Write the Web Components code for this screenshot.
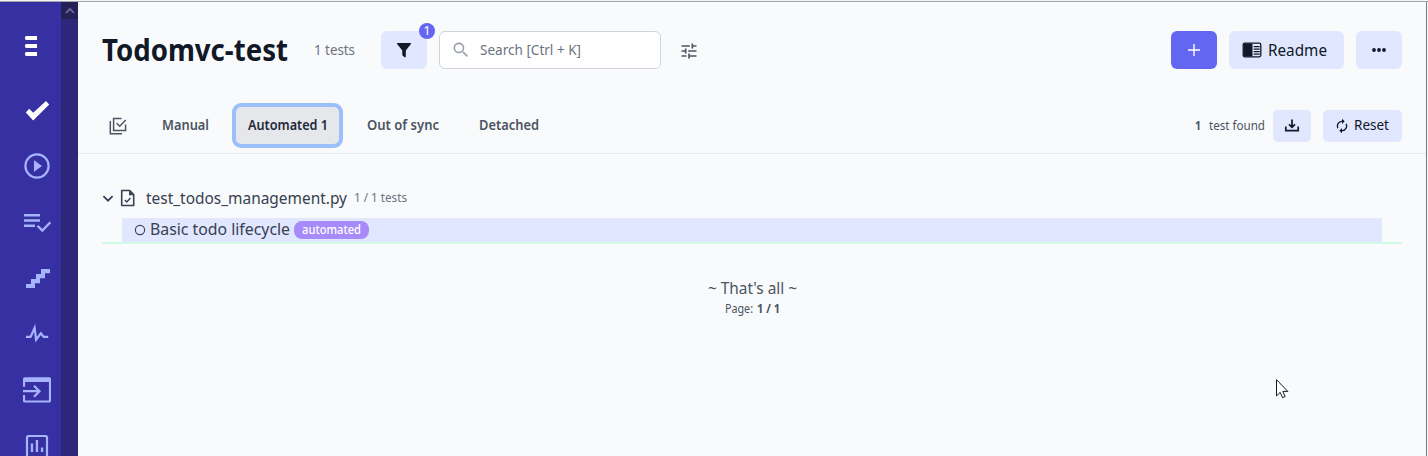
<!DOCTYPE html>
<html lang="en">
<head>
<meta charset="utf-8">
<title>Todomvc-test</title>
<style>
html,body{margin:0;height:100%;overflow:hidden;background:#f9fafb;font-family:"Noto Sans","Open Sans",sans-serif}
</style>
</head>
<body>
<tests-app></tests-app>
<script>
const define = (name, html, ready) => customElements.define(name, class extends HTMLElement {
  connectedCallback() {
    if (this.shadowRoot) return;
    const t = document.createElement('template');
    t.innerHTML = html;
    this.attachShadow({mode: 'open'}).append(t.content.cloneNode(true));
    if (ready) ready(this, this.shadowRoot);
  }
});

// Text run with a size, weight, and a condensed width.
define('fit-text', `<style>
:host{display:block;flex:none;white-space:nowrap}
span{display:inline-block;transform-origin:0 50%;vertical-align:top}
</style><span><slot></slot></span>`, (el, root) => {
  const g = n => el.getAttribute(n);
  const w = +g('w'), size = +g('size'), span = root.querySelector('span');
  el.style.cssText += `;width:${w}px;font-size:${size}px;font-weight:${g('weight') || 400};color:${g('color') || 'inherit'};height:${Math.round(size * 1.4)}px;line-height:${Math.round(size * 1.4)}px`;
  span.style.transform = `translateY(${g('dy') || 0}px) scaleX(${w / span.offsetWidth})`;
  const exact = span.getBoundingClientRect().width;
  if (exact) span.style.transform = `translateY(${g('dy') || 0}px) scaleX(${(w / span.offsetWidth) * (w / exact)})`;
});

const icons = {
  menu: [28, '<path fill="#fff" d="M3 4h11v4H3l-1-1V5zM3 12h11v4H3l-1-1v-2zM3 20h11v4H3l-1-1v-2z"/>'],
  check: [28, '<path fill="#fff" d="M6.2 12.8l4 4L23 5l3.2 3.5L10.2 24.6 2.8 16.4z"/>'],
  play: [28, '<circle cx="14" cy="14" r="11.6" fill="none" stroke="currentColor" stroke-width="2.2"/><path fill="currentColor" d="M11 8.3v11.4l8-5.7z"/>'],
  list: [28, '<path fill="currentColor" d="M1 6h16v2.5H1zM1 11.2h16v2.5H1zM1 16.4h11v2.5H1z"/><path fill="none" stroke="currentColor" stroke-width="2.3" d="M14.5 17.7l4.8 4.8 8-8.2"/>'],
  stairs: [28, '<path fill="currentColor" d="M3 20h5v-5h5v-5h5V5h9v4.2h-5v5h-5v5h-5V24H3z"/>'],
  pulse: [28, '<path fill="none" stroke="currentColor" stroke-width="2.2" d="M3 16.9h4.6l4-9 1.5 11.8 4.8-6.4 2.9 3.6h4.4"/>'],
  enter: [28, '<path fill="currentColor" d="M0 5.500V3a1.700 1.700 0 0 1 1.700-1.700h24.600A1.700 1.700 0 0 1 28 3v3H0z"/><path fill="none" stroke="currentColor" stroke-width="2.2" d="M1 3v7.800M1 19v5.500q0 1 1 1h24q1 0 1-1V3M0 15.200h16M11 9.700l5.500 5.500-5.500 5.500"/>'],
  chart: [28, '<rect x="4" y="4" width="20" height="21" rx="1.500" fill="none" stroke="currentColor" stroke-width="2.200"/><path fill="currentColor" d="M7.800 11.500h2.300V20H7.800zM12.800 8h2.300v12h-2.300zM17.900 15.500h2.300V20h-2.300z"/>'],
  filter: [16, '<path fill="currentColor" d="M1.300 1h13.400q.5.600.2 1.100L9.800 8.500v6.300q-.4.900-1.200.500L6.300 13.300V8.500L1.100 2.100Q.8 1.500 1.300 1z"/>'],
  search: [24, '<path fill="currentColor" d="M15.500 14h-.8l-.3-.3A6.500 6.500 0 1 0 13.700 14.400l.3.300v.8l5 5 1.500-1.500zM9.500 14a4.500 4.500 0 1 1 0-9 4.500 4.500 0 0 1 0 9z"/>'],
  tune: [24, '<path fill="currentColor" d="M3 17v2h6v-2zM3 5v2h10V5zM13 21v-2h8v-2h-8v-2h-2v6zM7 9v2H3v2h4v2h2V9zM21 13v-2H11v2zM15 9h2V7h4V5h-4V3h-2z"/>'],
  plus: [12, '<path stroke="#fff" stroke-width="1.400" d="M6 0v12M0 6h12"/>'],
  reader: [20, '<rect x="1.200" y="3.200" width="17.600" height="13.600" rx="1.500" fill="none" stroke="currentColor" stroke-width="1.300"/><path fill="currentColor" d="M1.500 3.500h9v13h-9zM11.700 6h6v1.200h-6zM11.700 8.500h6v1.200h-6zM11.700 11h6v1.200h-6zM11.700 13.500h6v1.200h-6z"/>'],
  dots: [16, '<g fill="currentColor"><circle cx="3" cy="8" r="1.900"/><circle cx="8" cy="8" r="1.900"/><circle cx="13" cy="8" r="1.900"/></g>'],
  select: [18, '<path fill="none" stroke="currentColor" stroke-width="1.500" d="M1.300 4v12.700H13M12.500 1.400H4.600v12h12V7.500M7.700 6.300l3 3L16.800 3"/>'],
  download: [16, '<path fill="none" stroke="currentColor" stroke-width="1.700" d="M1.800 8.500v4.200h12.400V8.500M8 1.500v7.500M5 6.300l3 3 3-3"/>'],
  reset: [24, '<path fill="currentColor" d="M12 6v3l4-4-4-4v3a8 8 0 0 0-6.800 12.300l1.500-1.500A6 6 0 0 1 12 6zM18.800 7.700l-1.500 1.500A6 6 0 0 1 12 18v-3l-4 4 4 4v-3a8 8 0 0 0 6.800-12.300z"/>'],
  chevron: [12, '<path fill="none" stroke="currentColor" stroke-width="1.800" d="M1.400 4.100L6 8.700l4.600-4.600"/>'],
  file: [18, '<path fill="none" stroke="currentColor" stroke-width="1.600" stroke-linejoin="round" d="M2.700 1.500h8l4 4v11H2.700z"/><path fill="currentColor" d="M10 1.500v4.800h4.800z"/><path fill="none" stroke="currentColor" stroke-width="1.400" d="M5.800 11l2 2 3.700-4"/>'],
  ring: [12, '<circle cx="6" cy="6" r="4.600" fill="none" stroke="currentColor" stroke-width="1.100"/>'],
  up: [10, '<path fill="none" stroke="#6f6a94" stroke-width="1.800" d="M1 7l4-4.200L9 7"/>']
};
define('ui-icon', `<style>:host{display:block;flex:none;line-height:0}svg{display:block}</style>`, (el, root) => {
  const [box, body] = icons[el.getAttribute('name')], s = el.getAttribute('size') || box;
  root.innerHTML += `<svg width="${s}" height="${s}" viewBox="0 0 ${box} ${box}">${body}</svg>`;
});

define('ui-button', `<style>
:host{display:flex;box-sizing:border-box;align-items:center;justify-content:center;flex:none;position:relative;height:38px;width:46px;border-radius:6px;background:#e0e7ff;color:#111827}
:host([primary]){background:#6366f1}
:host([small]){height:32px;border-radius:5px;margin-top:2px}
</style><slot></slot>`);

define('count-badge', `<style>
:host{position:absolute;right:-8px;top:-8px;width:16px;height:16px;border-radius:50%;background:#6366f1;color:#fff;font-size:13px;line-height:15px;text-align:center}
</style><slot></slot>`);

define('search-box', `<style>
:host{display:flex;flex:none;box-sizing:border-box;align-items:center;width:222px;height:38px;border:1px solid #d1d5db;border-radius:6px;background:#fff;padding-left:11px;gap:10px;color:#9ca3af}
</style><ui-icon name="search" size="20"></ui-icon><fit-text w="101" size="14" color="#6b7280" dy="-.4" style="margin-left:-1px">Search [Ctrl + K]</fit-text>`);

define('side-nav', `<style>
:host{display:flex;flex:none;width:78px;height:100%;background:#3730a3;color:#a5b4fc;overflow:hidden}
nav{width:61px;display:flex;flex-direction:column;gap:28px;padding:30px 0 0 23px;box-sizing:border-box}
.first{margin-bottom:8px}
.bar{width:17px;background:#2c277b}
.cap{height:17px;background:#242157;display:flex;align-items:center;justify-content:center}
</style><nav>
<ui-icon class="first" name="menu"></ui-icon><ui-icon name="check"></ui-icon><ui-icon name="play"></ui-icon><ui-icon name="list"></ui-icon><ui-icon name="stairs"></ui-icon><ui-icon name="pulse"></ui-icon><ui-icon name="enter"></ui-icon><ui-icon name="chart"></ui-icon>
</nav><div class="bar"><div class="cap"><ui-icon name="up"></ui-icon></div></div>`);

define('page-header', `<style>
:host{display:flex;align-items:center;height:38px;margin:29px 24px 0}
.space{flex:1}
</style>
<fit-text w="186" size="30.500" weight="700" color="#111827" dy="-1">Todomvc-test</fit-text>
<fit-text w="41" size="14" color="#6b7280" dy="-.4" style="margin:0 26px">1 tests</fit-text>
<ui-button><ui-icon name="filter"></ui-icon><count-badge>1</count-badge></ui-button>
<search-box style="margin-left:12px"></search-box>
<ui-icon name="tune" size="20" style="margin-left:18px;margin-top:2px;color:#4b5563"></ui-icon>
<div class="space"></div>
<ui-button primary><ui-icon name="plus"></ui-icon></ui-button>
<ui-button style="width:115px;margin:0 12px;gap:6px;padding-right:4px"><ui-icon name="reader"></ui-icon><fit-text w="59" size="16" dy="-.5">Readme</fit-text></ui-button>
<ui-button><ui-icon name="dots"></ui-icon></ui-button>`);

define('tab-item', `<style>
:host{display:flex;flex:none;align-items:center;justify-content:center;box-sizing:border-box;height:37px;padding:0 12px;color:#4b5563}
:host([active]){background:#e5e7eb;color:#1f2937;border-radius:5px;box-shadow:0 0 0 4px #9abffb}
</style><slot></slot>`);

define('filter-tabs', `<style>
:host{display:flex;align-items:center;height:56px;margin-top:28px;padding:0 24px;border-bottom:1px solid #e5e7eb}
.space{flex:1}
</style>
<ui-icon name="select" style="margin:1px 30px 0 7px;color:#4b5563"></ui-icon>
<tab-item style="margin-left:-7px"><fit-text w="47" size="14" weight="600" dy="-.4">Manual</fit-text></tab-item>
<tab-item active style="margin-left:15px;width:103px"><fit-text w="80" size="14" weight="600" dy="-.4">Automated 1</fit-text></tab-item>
<tab-item style="margin-left:16px"><fit-text w="72" size="14" weight="600" dy="-.4">Out of sync</fit-text></tab-item>
<tab-item style="margin-left:16px"><fit-text w="60" size="14" weight="600" dy="-.4">Detached</fit-text></tab-item>
<div class="space"></div>
<fit-text w="6" size="12" weight="700" color="#4b5563">1</fit-text>
<fit-text w="56" size="12.200" color="#4b5563" style="margin:0 8px">test found</fit-text>
<ui-button small style="width:38px"><ui-icon name="download"></ui-icon></ui-button>
<ui-button small style="width:79px;margin-left:12px;gap:4px;padding-right:2px"><ui-icon name="reset" size="16"></ui-icon><fit-text w="35" size="14.200" dy="-1.500">Reset</fit-text></ui-button>`);

define('test-tree', `<style>
:host{display:block;margin:34px 24px 0;color:#374151}
.file{display:flex;align-items:center;height:20px}
.row{display:flex;align-items:center;height:24px;margin:10px 20px 0;padding-left:12px;background:#e0e7ff}
.line{height:2px;background:#d1fae5}
.tag{display:flex;align-items:center;justify-content:center;width:75px;height:18px;border-radius:8px;background:#a78bfa;margin-left:4px}
</style>
<div class="file"><ui-icon name="chevron"></ui-icon><ui-icon name="file" style="margin:0 9px 0 5px"></ui-icon>
<fit-text w="201" size="16" dy="-.5">test_todos_management.py</fit-text>
<fit-text w="53" size="12" color="#6b7280" style="margin-left:7px" dy="-1.500">1 / 1 tests</fit-text></div>
<div class="row"><ui-icon name="ring"></ui-icon><fit-text w="140" size="16" style="margin-left:4px" dy="-1">Basic todo lifecycle</fit-text><div class="tag"><fit-text w="59" size="12" weight="500" color="#fff" dy="-1.500">automated</fit-text></div></div>
<div class="line"></div>`);

define('list-end', `<style>
:host{display:flex;flex-direction:column;align-items:center;margin-top:33px;color:#4b5563}
div{display:flex;gap:4px;margin-top:1px}
</style><fit-text w="89" size="16" dy="-.5">~ That's all ~</fit-text>
<div><fit-text w="28" size="12" dy="-.5">Page:</fit-text><fit-text w="23" size="12" weight="700" dy="-.5">1 / 1</fit-text></div>`);

define('mouse-pointer', `<style>:host{position:absolute;left:1276px;top:379px}svg{display:block}</style>
<svg width="13" height="20" viewBox="0 0 13 20"><path d="M.5.700v16.200l3.700-3.500 2.400 5.300 2.600-1.200-2.400-5.100h5z" fill="#fff" stroke="#111827"/></svg>`);

define('tests-app', `<style>
:host{display:flex;flex-direction:column;height:456px;width:1428px;box-sizing:border-box;overflow:hidden}
.edge{height:1px;background:#f3f4f6;border-bottom:1px solid #a5a6ae;flex:none}
.body{display:flex;flex:1;min-height:0}
main{flex:1;min-width:0;border-right:1px solid #77787b;margin-right:1px}
</style>
<div class="edge"></div>
<div class="body"><side-nav></side-nav><main><page-header></page-header><filter-tabs></filter-tabs><test-tree></test-tree><list-end></list-end></main></div>
<mouse-pointer></mouse-pointer>`);
</script>
</body>
</html>
